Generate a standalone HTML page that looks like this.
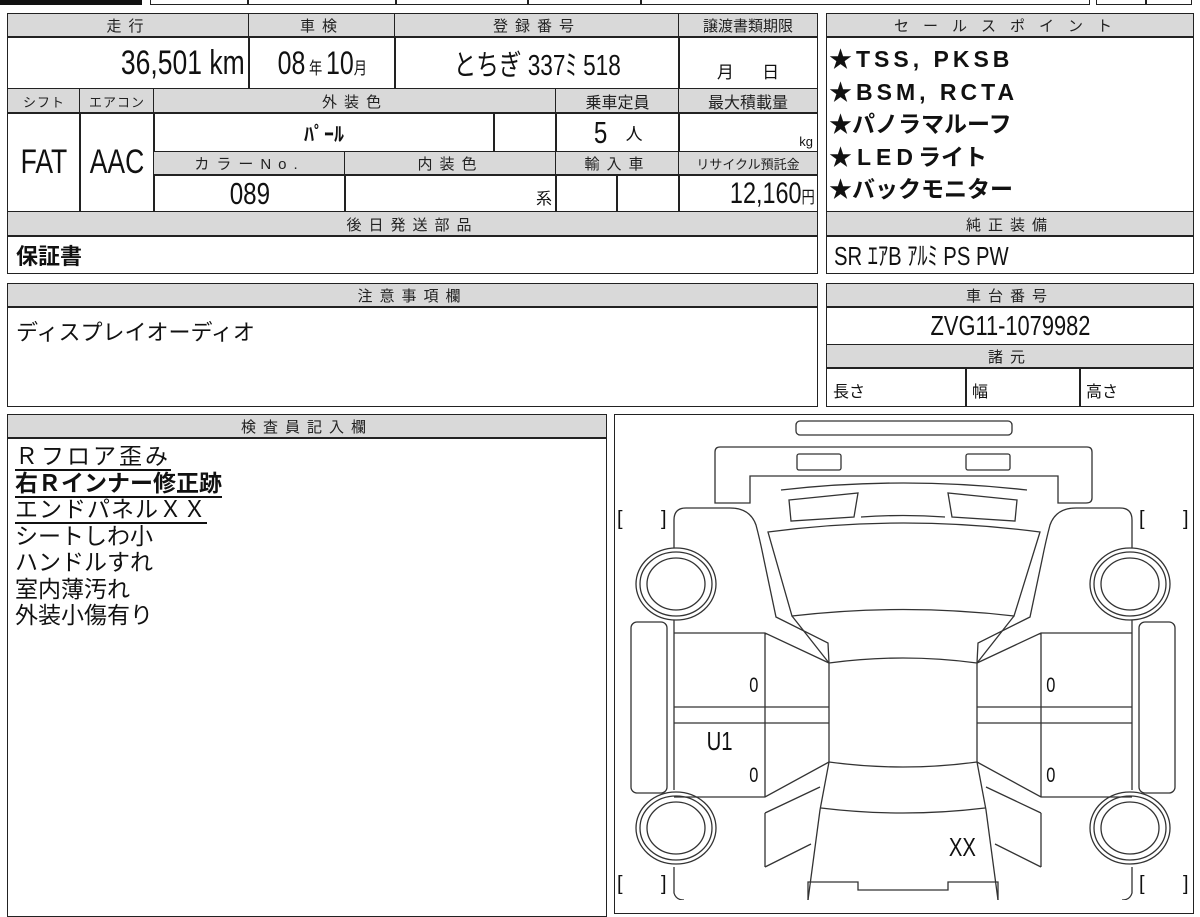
<!DOCTYPE html>
<html><head><meta charset="utf-8">
<style>
*{margin:0;padding:0;box-sizing:border-box}
body{width:1200px;height:900px;background:#fff;position:relative;overflow:hidden;font-family:"Liberation Sans","Noto Sans CJK JP",sans-serif;color:#111}
.c{position:absolute;border:1.5px solid #222;display:flex;align-items:center;justify-content:center;white-space:nowrap}
.h{background:#d9d9d9;font-size:15px;letter-spacing:7px;color:#222}
.b{position:absolute;border:2px solid #222}
.n{display:inline-block;transform:scaleX(.78);transform-origin:center}
.t{position:absolute;white-space:nowrap}
</style></head><body>
<!-- top strip -->
<div style="position:absolute;left:0;top:0;width:142px;height:5px;background:#111"></div>
<div style="position:absolute;left:150px;top:-2px;width:940px;height:7px;border:1.5px solid #222"></div>
<div style="position:absolute;left:247px;top:0;width:1.5px;height:5px;background:#222"></div>
<div style="position:absolute;left:395px;top:0;width:1.5px;height:5px;background:#222"></div>
<div style="position:absolute;left:527px;top:0;width:1.5px;height:5px;background:#222"></div>
<div style="position:absolute;left:640px;top:0;width:1.5px;height:5px;background:#222"></div>
<div style="position:absolute;left:1096px;top:-2px;width:96px;height:7px;border:1.5px solid #222"></div>
<div style="position:absolute;left:1145px;top:0;width:1.5px;height:5px;background:#222"></div>

<!-- left main box -->
<div class="c h" style="left:7px;top:13px;width:243px;height:25px">走行</div>
<div class="c h" style="left:248px;top:13px;width:148px;height:25px">車検</div>
<div class="c h" style="left:394px;top:13px;width:286px;height:25px">登録番号</div>
<div class="c h" style="left:678px;top:13px;width:140px;height:25px;letter-spacing:0">譲渡書類期限</div>
<div class="c" style="left:7px;top:36px;width:243px;height:54px;justify-content:flex-end;padding-right:4px;font-size:34px"><span class="n" style="transform-origin:right">36,501 km</span></div>
<div class="c" style="left:248px;top:36px;width:148px;height:54px;font-size:32px"><span class="n">08<span style="font-size:17px"> 年 </span>10<span style="font-size:17px">月</span></span></div>
<div class="c" style="left:394px;top:36px;width:286px;height:54px;font-size:29px"><span class="n">とちぎ 337ﾐ 518</span></div>
<div class="c" style="left:678px;top:36px;width:140px;height:54px;font-size:17px;align-items:flex-end;padding-bottom:6px">月&nbsp;&nbsp;&nbsp;&nbsp;&nbsp;&nbsp;日</div>

<div class="c h" style="left:7px;top:88px;width:74px;height:26px;letter-spacing:1px;font-size:13px">シフト</div>
<div class="c h" style="left:79px;top:88px;width:76px;height:26px;letter-spacing:1px;font-size:13px">エアコン</div>
<div class="c h" style="left:153px;top:88px;width:404px;height:26px">外装色</div>
<div class="c h" style="left:555px;top:88px;width:125px;height:26px;letter-spacing:0;font-size:16px">乗車定員</div>
<div class="c h" style="left:678px;top:88px;width:140px;height:26px;letter-spacing:0;font-size:16px">最大積載量</div>

<div class="c" style="left:7px;top:112px;width:74px;height:101px;font-size:34px"><span class="n">FAT</span></div>
<div class="c" style="left:79px;top:112px;width:76px;height:101px;font-size:34px"><span class="n">AAC</span></div>
<div class="c" style="left:153px;top:112px;width:342px;height:41px;font-size:20px;font-weight:bold">ﾊﾟｰﾙ</div>
<div class="c" style="left:493px;top:112px;width:64px;height:41px"></div>
<div class="c" style="left:555px;top:112px;width:125px;height:41px;font-size:31px"><span class="n">5</span><span style="font-size:17px;margin-left:16px">人</span></div>
<div class="c" style="left:678px;top:112px;width:140px;height:41px;justify-content:flex-end;align-items:flex-end;padding:0 4px 3px 0;font-size:13px">kg</div>

<div class="c h" style="left:153px;top:151px;width:193px;height:25px">カラーNo.</div>
<div class="c h" style="left:344px;top:151px;width:213px;height:25px">内装色</div>
<div class="c h" style="left:555px;top:151px;width:125px;height:25px">輸入車</div>
<div class="c h" style="left:678px;top:151px;width:140px;height:25px;letter-spacing:0;font-size:13px">リサイクル預託金</div>

<div class="c" style="left:153px;top:174px;width:193px;height:39px;font-size:31px"><span class="n">089</span></div>
<div class="c" style="left:344px;top:174px;width:213px;height:39px;justify-content:flex-end;align-items:flex-end;padding:0 4px 3px 0;font-size:16px">系</div>
<div class="c" style="left:555px;top:174px;width:63px;height:39px"></div>
<div class="c" style="left:616px;top:174px;width:64px;height:39px"></div>
<div class="c" style="left:678px;top:174px;width:140px;height:39px;justify-content:flex-end;padding-right:2px;font-size:30px"><span class="n" style="transform-origin:right">12,160<span style="font-size:17px">円</span></span></div>

<div class="c h" style="left:7px;top:211px;width:811px;height:26px">後日発送部品</div>
<div class="c" style="left:7px;top:235px;width:811px;height:39px;justify-content:flex-start;padding-left:8px;font-size:22px;font-weight:bold">保証書</div>

<!-- right top box -->
<div class="c h" style="left:826px;top:13px;width:368px;height:25px;letter-spacing:14px">セールスポイント</div>
<div class="c" style="left:826px;top:36px;width:368px;height:177px;display:block;padding:6px 0 0 2px;font-size:23px;font-weight:bold;line-height:32.5px">
<div style="letter-spacing:4px">★TSS, PKSB</div>
<div style="letter-spacing:4px">★BSM, RCTA</div>
<div>★パノラマルーフ</div>
<div><span style="letter-spacing:5px">★LED</span>ライト</div>
<div>★バックモニター</div>
</div>
<div class="c h" style="left:826px;top:211px;width:368px;height:26px">純正装備</div>
<div class="c" style="left:826px;top:235px;width:368px;height:39px;justify-content:flex-start;padding-left:7px;font-size:26px"><span class="n" style="transform-origin:left">SR ｴｱB ｱﾙﾐ PS PW</span></div>

<!-- notes -->
<div class="c h" style="left:7px;top:283px;width:811px;height:25px">注意事項欄</div>
<div class="c" style="left:7px;top:306px;width:811px;height:101px;align-items:flex-start;justify-content:flex-start;padding:8px 0 0 8px;font-size:22px">ディスプレイオーディオ</div>

<div class="c h" style="left:826px;top:283px;width:368px;height:25px">車台番号</div>
<div class="c" style="left:826px;top:306px;width:368px;height:40px;font-size:28px"><span class="n">ZVG11-1079982</span></div>
<div class="c h" style="left:826px;top:344px;width:368px;height:25px">諸元</div>
<div class="c" style="left:826px;top:367px;width:141px;height:40px;justify-content:flex-start;padding:6px 0 0 6px;font-size:16px">長さ</div>
<div class="c" style="left:965px;top:367px;width:116px;height:40px;justify-content:flex-start;padding:6px 0 0 6px;font-size:16px">幅</div>
<div class="c" style="left:1079px;top:367px;width:115px;height:40px;justify-content:flex-start;padding:6px 0 0 6px;font-size:16px">高さ</div>

<!-- inspector -->
<div class="c h" style="left:7px;top:414px;width:600px;height:25px">検査員記入欄</div>
<div class="c" style="left:7px;top:437px;width:600px;height:480px;display:block;padding:5px 0 0 7px;font-size:23px;line-height:26.5px">
<div><span style="border-bottom:2px solid #111;letter-spacing:3px">Ｒフロア歪み</span></div>
<div><span style="border-bottom:2px solid #111;font-weight:bold">右Ｒインナー修正跡</span></div>
<div><span style="border-bottom:2px solid #111;letter-spacing:1px">エンドパネルＸＸ</span></div>
<div>シートしわ小</div>
<div>ハンドルすれ</div>
<div>室内薄汚れ</div>
<div>外装小傷有り</div>
</div>

<!-- diagram -->
<div class="c" style="left:614px;top:414px;width:580px;height:500px"></div>
<svg style="position:absolute;left:0;top:0" width="1200" height="900" viewBox="0 0 1200 900" fill="none" stroke="#333" stroke-width="1.3">
<rect x="796" y="421" width="216" height="14" rx="4"/>
<path d="M715 503 V452 Q715 447 720 447 H1087 Q1092 447 1092 452 V498 Q1092 503 1086 503 H1058 V476 H750 V503 Z"/>
<rect x="797" y="454" width="44" height="16" rx="2"/>
<rect x="966" y="454" width="44" height="16" rx="2"/>
<path d="M781 490 Q903 476 1027 490"/>
<path d="M789 500 L858 493 L854 517 L791 521 Z"/>
<path d="M1017 500 L948 493 L952 517 L1015 521 Z"/>
<path d="M861 517 Q903 514 945 517"/>
<path d="M768 532 Q903 514 1040 532 L1014 616 Q903 603 792 616 Z"/>
<path d="M674 548 V520 Q674 508 686 508 H730 Q750 508 756 525 Q760 540 764 560 L776 617 L828 643 L829 663"/>
<path d="M674 620 V790"/><path d="M674 867 V893 Q676 900 684 900"/>
<path d="M1132 548 V520 Q1132 508 1120 508 H1076 Q1056 508 1050 525 Q1046 540 1042 560 L1030 617 L978 643 L977 663"/>
<path d="M1132 620 V790"/><path d="M1132 867 V893 Q1130 900 1122 900"/>
<path d="M792 616 L829 663 M1014 616 L977 663"/>
<ellipse cx="676" cy="584" rx="40" ry="36"/><ellipse cx="676" cy="584" rx="36" ry="32"/><ellipse cx="676" cy="584" rx="29" ry="26"/>
<ellipse cx="676" cy="828" rx="40" ry="36"/><ellipse cx="676" cy="828" rx="36" ry="32"/><ellipse cx="676" cy="828" rx="29" ry="26"/>
<ellipse cx="1130" cy="584" rx="40" ry="36"/><ellipse cx="1130" cy="584" rx="36" ry="32"/><ellipse cx="1130" cy="584" rx="29" ry="26"/>
<ellipse cx="1130" cy="828" rx="40" ry="36"/><ellipse cx="1130" cy="828" rx="36" ry="32"/><ellipse cx="1130" cy="828" rx="29" ry="26"/>
<rect x="631" y="622" width="36" height="171" rx="6"/>
<rect x="1139" y="622" width="36" height="171" rx="6"/>
<path d="M674 633 H765 L829 663 M674 707 H829 M674 723 H829 M674 797 H765 L829 762 M765 633 V797"/>
<path d="M1132 633 H1041 L977 663 M1132 707 H977 M1132 723 H977 M1132 797 H1041 L977 762 M1041 633 V797"/>
<path d="M829 663 Q903 653 977 663 V762 Q903 772 829 762 Z"/>
<path d="M829 762 L820 810 L808 900 M977 762 L986 810 L998 900"/>
<path d="M821 808 Q903 818 985 808"/>
<path d="M765 813 L820 787 M765 867 L811 844 M765 813 V867"/>
<path d="M1041 813 L986 787 M1041 867 L995 844 M1041 813 V867"/>
<path d="M808 900 V882 H858 V890 H948 V882 H998 V900"/>
</svg>
<div class="t" style="left:617px;top:508px;font-size:20px">[</div>
<div class="t" style="left:661px;top:508px;font-size:20px">]</div>
<div class="t" style="left:1139px;top:508px;font-size:20px">[</div>
<div class="t" style="left:1183px;top:508px;font-size:20px">]</div>
<div class="t" style="left:617px;top:873px;font-size:20px">[</div>
<div class="t" style="left:661px;top:873px;font-size:20px">]</div>
<div class="t" style="left:1139px;top:873px;font-size:20px">[</div>
<div class="t" style="left:1183px;top:873px;font-size:20px">]</div>
<div class="t" style="left:748px;top:674px;font-size:21px"><span class="n">0</span></div>
<div class="t" style="left:748px;top:764px;font-size:21px"><span class="n">0</span></div>
<div class="t" style="left:1045px;top:674px;font-size:21px"><span class="n">0</span></div>
<div class="t" style="left:1045px;top:764px;font-size:21px"><span class="n">0</span></div>
<div class="t" style="left:703px;top:726px;font-size:26px"><span class="n">U1</span></div>
<div class="t" style="left:945px;top:832px;font-size:26px"><span class="n">XX</span></div>
</body></html>
